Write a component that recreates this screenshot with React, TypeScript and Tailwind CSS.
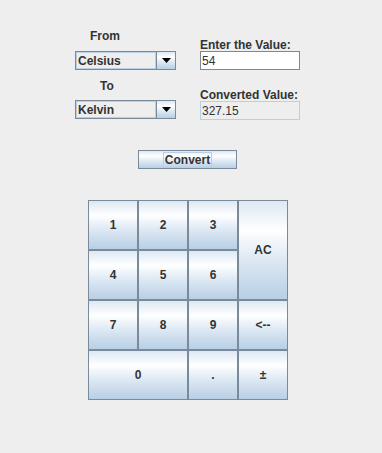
const metal =
  "bg-[linear-gradient(180deg,#dde8f3_0%,#ffffff_30%,#dde8f3_60%,#b8cfe5_100%)]";

function Combo({ value }: { value: string }) {
  return (
    <div className="flex h-[19px] w-[101px] border border-[#7a8a99] bg-[#eeeeee]">
      <div className="flex flex-1 items-center border border-[#b8cfe5] pl-[1px] text-[12px] font-bold leading-[14px]">
        {value}
      </div>
      <div className={`flex w-[19px] items-center justify-center border-l border-[#7a8a99] ${metal}`}>
        <svg width="9" height="5" viewBox="0 0 9 5">
          <path d="M0 0H9L4.5 5Z" fill="#000" />
        </svg>
      </div>
    </div>
  );
}

function Key({ label, className = "" }: { label: string; className?: string }) {
  return (
    <div
      className={`flex items-center justify-center border border-[#7a8a99] text-[12px] font-bold ${metal} ${className}`}
    >
      {label}
    </div>
  );
}

export default function App() {
  return (
    <div className="h-[453px] w-[382px] bg-[#eeeeee] font-['Liberation_Sans',Arial,sans-serif] text-[#333333]">
      <div className="flex gap-[24px] pl-[75px] pt-[29px]">
        <div className="flex w-[101px] flex-col">
          <div className="h-[14px] pl-[15px] text-[12px] font-bold leading-[14px]">From</div>
          <div className="mt-[8px]">
            <Combo value="Celsius" />
          </div>
          <div className="mt-[9px] h-[14px] pl-[25px] text-[12px] font-bold leading-[14px]">To</div>
          <div className="mt-[7px]">
            <Combo value="Kelvin" />
          </div>
        </div>
        <div className="flex w-[100px] flex-col pt-[11px]">
          <div className="h-[11px] text-[12px] font-bold leading-[11px]">Enter the Value:</div>
          <div className="flex h-[19px] items-center border border-[#7a8a99] bg-white pl-[1px] text-[12px]">
            54
          </div>
          <div className="mt-[20px] h-[11px] text-[12px] font-bold leading-[11px]">Converted Value:</div>
          <div className="flex h-[19px] items-center border border-[#b8cfe5] bg-[#eeeeee] pl-[1px] text-[12px]">
            327.15
          </div>
        </div>
      </div>

      <div className={`ml-[138px] mt-[30px] flex h-[19px] w-[99px] items-center justify-center border border-[#7a8a99] ${metal}`}>
        <span className="border border-[#b8cfe5] px-[1px] text-[12px] font-bold leading-[14px]">Convert</span>
      </div>

      <div className="ml-[88px] mt-[31px] grid h-[200px] w-[200px] grid-cols-4 grid-rows-4">
        <Key label="1" />
        <Key label="2" />
        <Key label="3" />
        <Key label="AC" className="row-span-2" />
        <Key label="4" />
        <Key label="5" />
        <Key label="6" />
        <Key label="7" />
        <Key label="8" />
        <Key label="9" />
        <Key label="<--" />
        <Key label="0" className="col-span-2" />
        <Key label="." />
        <Key label="±" />
      </div>
    </div>
  );
}
